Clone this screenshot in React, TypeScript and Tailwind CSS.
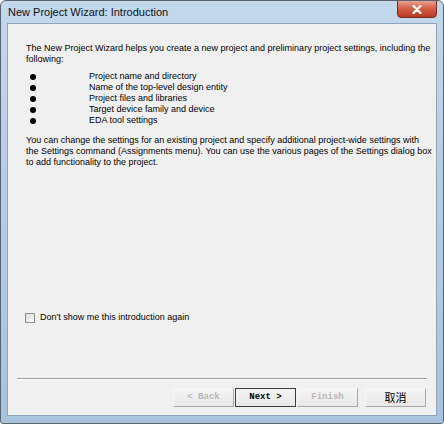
import React from "react";

const items = [
  "Project name and directory",
  "Name of the top-level design entity",
  "Project files and libraries",
  "Target device family and device",
  "EDA tool settings",
];

function WizButton({ label, disabled, focused, cjk }: { label: string; disabled?: boolean; focused?: boolean; cjk?: boolean }) {
  return (
    <button
      className={
        "h-[19px] w-[61px] flex items-center justify-center text-[9px] " +
        (focused ? "border border-[#3c3c3c] " : "border border-[#a8a8a8] border-t-[#f4f4f4] border-l-[#f4f4f4] ") +
        (disabled ? "text-[#b8b8b8] " : "text-black ") +
        (cjk ? "font-['Noto_Sans_CJK_SC',sans-serif] text-[11px]" : "font-['Liberation_Mono',monospace] font-bold")
      }
      style={{ background: "linear-gradient(#f4f4f4, #e8e8e8)" }}
    >
      {label}
    </button>
  );
}

export default function App() {
  return (
    <div className="w-[444px] h-[424px] bg-white">
      <div
        className="w-[444px] h-[424px] flex flex-col border border-[#5a6470] rounded-t-[6px] rounded-b-[3px] overflow-hidden"
        style={{ background: "linear-gradient(180deg, #c4d8ec 0%, #b7cde4 40%, #a9c2dc 100%)" }}
      >
        {/* title bar */}
        <div className="h-[22px] flex items-start relative shrink-0">
          <span className="ml-[7px] mt-[5px] text-[11px] leading-[13px] text-[#111] font-['Liberation_Sans',sans-serif]">
            New Project Wizard: Introduction
          </span>
          <div
            className="absolute right-[6px] top-[-1px] w-[40px] h-[18px] rounded-b-[4px] border border-[#7a2a22] flex items-center justify-center"
            style={{ background: "linear-gradient(180deg, #e9a08e 0%, #d45a42 50%, #b93a24 100%)" }}
          >
            <svg width="10" height="9" viewBox="0 0 10 9">
              <path d="M1.5 1 L8.5 8 M8.5 1 L1.5 8" stroke="#ffffff" strokeWidth="2.2" strokeLinecap="round" />
            </svg>
          </div>
        </div>

        {/* client */}
        <div className="flex-1 mx-[6px] mb-[7px] border border-[#8ea4bc] bg-[#f0f0f0] flex flex-col font-['Liberation_Sans',sans-serif] text-[9px] leading-[11px] text-black">
          <div className="pl-[18px] pr-[6px] pt-[19px] whitespace-nowrap">
            <p>
              The New Project Wizard helps you create a new project and preliminary project settings, including the
              <br />
              following:
            </p>
            <ul className="mt-[6px]">
              {items.map((t) => (
                <li key={t} className="flex items-center h-[11px]">
                  <span className="w-[63px] pl-[4px] flex items-center">
                    <span className="w-[6px] h-[6px] rounded-full bg-black inline-block" />
                  </span>
                  <span>{t}</span>
                </li>
              ))}
            </ul>
            <p className="mt-[9px]">
              You can change the settings for an existing project and specify additional project-wide settings with
              <br />
              the Settings command (Assignments menu). You can use the various pages of the Settings dialog box
              <br />
              to add functionality to the project.
            </p>
          </div>

          <div className="flex-1" />

          <label className="flex items-center ml-[17px] mb-[55px] gap-[5px]">
            <span className="w-[10px] h-[10px] border border-[#8e8f8f] bg-[linear-gradient(135deg,#d4dcd4,#ffffff)] inline-block" />
            <span>Don't show me this introduction again</span>
          </label>

          <div className="mx-[9px] border-t border-[#a0a0a0] border-b border-b-white" />

          <div className="flex justify-end items-center pr-[10px] pt-[8px] pb-[8px]">
            <div className="flex gap-[1px]">
              <WizButton label="< Back" disabled />
              <WizButton label="Next >" focused />
              <WizButton label="Finish" disabled />
            </div>
            <div className="ml-[7px]">
              <WizButton label="取消" cjk />
            </div>
          </div>
        </div>
      </div>
    </div>
  );
}
